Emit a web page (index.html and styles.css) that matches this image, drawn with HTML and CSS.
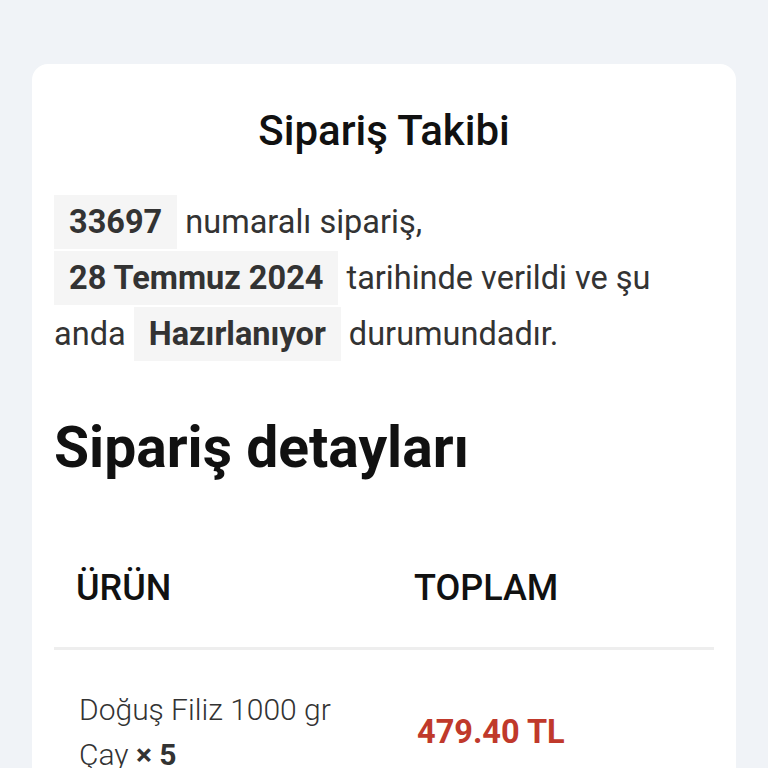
FILE: index.html
```html
<!DOCTYPE html>
<html lang="tr">
<head>
    <meta charset="UTF-8">
    <meta name="viewport" content="width=device-width, initial-scale=1.0">
    <title>Sipariş Takibi</title>
    <link rel="stylesheet" href="styles.css">
</head>
<body>
    <div class="order-card">
        <h1 class="order-title">Sipariş Takibi</h1>

        <p class="order-info">
            <mark>33697</mark> numaralı sipariş, <mark>28 Temmuz 2024</mark> tarihinde verildi ve şu anda <mark>Hazırlanıyor</mark> durumundadır.
        </p>

        <h2 class="details-title">Sipariş detayları</h2>

        <table class="order-table">
            <thead>
                <tr>
                    <th class="col-product">ÜRÜN</th>
                    <th class="col-total">TOPLAM</th>
                </tr>
            </thead>
            <tbody>
                <tr>
                    <td class="col-product">Doğuş Filiz 1000 gr Çay <strong>× 5</strong></td>
                    <td class="col-total"><span class="price">479.40 TL</span></td>
                </tr>
            </tbody>
        </table>
    </div>
</body>
</html>
```

FILE: styles.css
```css
body {
    font-family: 'Roboto', 'Noto Sans', sans-serif;
    background: #f0f3f7;
    margin: 0;
    padding: 64px 32px;
    color: #333;
}

.order-card {
    background: white;
    border-radius: 16px;
    padding: 42px 22px 40px;
}

.order-title {
    text-align: center;
    color: #111;
    font-size: 42px;
    font-weight: 500;
    line-height: 50px;
    margin: 0 0 38px;
}

.order-info {
    font-size: 32.5px;
    line-height: 56px;
    margin: 0 0 52px;
}

.order-info mark {
    background: #f5f5f5;
    color: #333;
    font-weight: 700;
    padding: 8px 15px;
    white-space: nowrap;
}

.details-title {
    color: #111;
    font-size: 57px;
    font-weight: 700;
    line-height: 68px;
    margin: 0 0 47px;
}

.order-table {
    width: 100%;
    border-collapse: collapse;
}

.order-table th {
    text-align: left;
    color: #111;
    font-size: 36px;
    font-weight: 500;
    line-height: 48px;
    padding: 35px 22px;
    border-bottom: 3px solid #eee;
}

.order-table .col-product {
    width: 338px;
    box-sizing: border-box;
}

.order-table td {
    font-size: 30px;
    line-height: 45px;
    font-weight: 300;
    padding: 37px 22px 37px 25px;
    vertical-align: middle;
}

.order-table td strong {
    font-weight: 700;
}

.price {
    color: #c0392b;
    font-size: 32.5px;
    font-weight: 700;
}
```
